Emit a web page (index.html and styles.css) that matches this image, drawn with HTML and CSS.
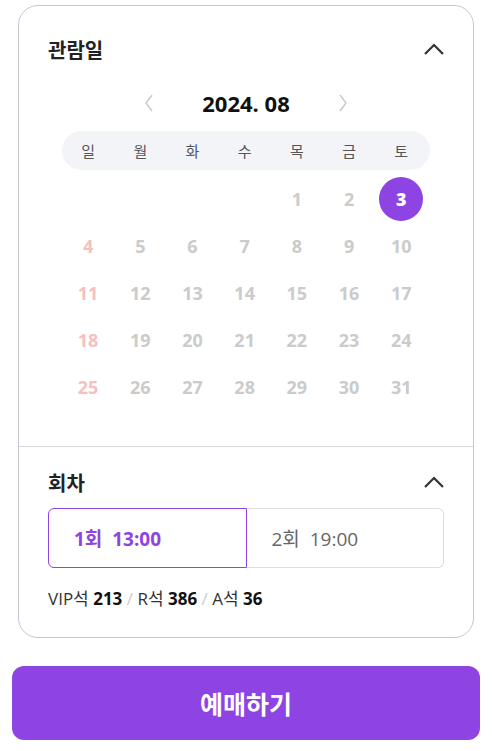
FILE: index.html
```html
<!DOCTYPE html>
<html lang="ko">
  <head>
    <meta charset="UTF-8" />
    <meta name="viewport" content="width=device-width, initial-scale=1.0" />
    <title>예매</title>
    <link rel="stylesheet" href="styles.css" />
  </head>
  <body>
    <div class="page">
      <div class="card">
        <section class="section date-section">
          <div class="section-head">
            <h2>관람일</h2>
            <svg class="toggle" width="22" height="14" viewBox="0 0 22 14">
              <path d="M2 12 L11 3 L20 12" fill="none" stroke="#333" stroke-width="2.2" />
            </svg>
          </div>

          <div class="month-nav">
            <svg class="nav-arrow" width="10" height="18" viewBox="0 0 10 18">
              <path d="M8 1 L2 9 L8 17" fill="none" stroke="#c8c8c8" stroke-width="1.4" />
            </svg>
            <span class="month">2024. 08</span>
            <svg class="nav-arrow" width="10" height="18" viewBox="0 0 10 18">
              <path d="M2 1 L8 9 L2 17" fill="none" stroke="#c8c8c8" stroke-width="1.4" />
            </svg>
          </div>

          <div class="weekdays">
            <span>일</span><span>월</span><span>화</span><span>수</span
            ><span>목</span><span>금</span><span>토</span>
          </div>

          <div class="days">
            <span></span><span></span><span></span><span></span>
            <span>1</span><span>2</span>
            <span class="selected"><b>3</b></span>
            <span class="sun">4</span><span>5</span><span>6</span><span>7</span
            ><span>8</span><span>9</span><span>10</span>
            <span class="sun">11</span><span>12</span><span>13</span><span>14</span
            ><span>15</span><span>16</span><span>17</span>
            <span class="sun">18</span><span>19</span><span>20</span><span>21</span
            ><span>22</span><span>23</span><span>24</span>
            <span class="sun">25</span><span>26</span><span>27</span><span>28</span
            ><span>29</span><span>30</span><span>31</span>
          </div>
        </section>

        <section class="section round-section">
          <div class="section-head">
            <h2>회차</h2>
            <svg class="toggle" width="22" height="14" viewBox="0 0 22 14">
              <path d="M2 12 L11 3 L20 12" fill="none" stroke="#333" stroke-width="2.2" />
            </svg>
          </div>

          <div class="rounds">
            <button class="round active">1회&nbsp; 13:00</button>
            <button class="round">2회&nbsp; 19:00</button>
          </div>

          <p class="seats">
            VIP석 <b>213</b> <i>/</i> R석 <b>386</b> <i>/</i> A석 <b>36</b>
          </p>
        </section>
      </div>

      <button class="book-btn">예매하기</button>
    </div>
  </body>
</html>
```

FILE: styles.css
```css
* {
  margin: 0;
  padding: 0;
  box-sizing: border-box;
  font-family: "Open Sans", "Noto Sans CJK KR", sans-serif;
}

body {
  background-color: #fff;
  color: #222;
}

.page {
  padding: 5px 12px 10px;
  display: flex;
  flex-direction: column;
  gap: 28px;
}

.card {
  margin: 0 6px;
  border: 1px solid #c3c7d1;
  border-radius: 20px;
  background-color: #fff;
}

.section {
  padding: 30px 29px 36px;
}

.section-head {
  display: flex;
  justify-content: space-between;
  align-items: center;
  height: 26px;
}

.section-head h2 {
  font-size: 20px;
  font-weight: 700;
  color: #222;
}

.toggle {
  margin-right: -1px;
}

.month-nav {
  margin-top: 26px;
  height: 30px;
  display: flex;
  justify-content: center;
  align-items: center;
  gap: 40px;
}

.month {
  font-size: 22px;
  font-weight: 700;
  color: #111;
  width: 104px;
  text-align: center;
}

.weekdays {
  margin: 13px 14px 0;
  height: 39px;
  background-color: #f3f4f8;
  border-radius: 20px;
  display: grid;
  grid-template-columns: repeat(7, 52.2px);
  align-items: center;
  text-align: center;
  font-size: 15px;
  color: #555;
}

.days {
  margin: 5px 14px 0;
  display: grid;
  grid-template-columns: repeat(7, 52.2px);
  grid-auto-rows: 47px;
  align-items: center;
  justify-items: center;
  font-size: 18px;
  font-weight: 700;
  color: #cbcbcb;
}

.days .sun {
  color: #f6bfc0;
}

.days .selected b {
  display: flex;
  justify-content: center;
  align-items: center;
  width: 44px;
  height: 44px;
  border-radius: 50%;
  background-color: #8e44e3;
  color: #fff;
}

.round-section {
  border-top: 1px solid #d8dae0;
  padding: 22px 29px 28px;
}

.rounds {
  margin-top: 13px;
  display: flex;
}

.round {
  flex: 1;
  height: 60px;
  padding-left: 25px;
  text-align: left;
  background-color: #fff;
  border: 1px solid #dcdde2;
  font-size: 19px;
  color: #666;
}

.round:first-child {
  border-radius: 6px 0 0 6px;
}

.round:last-child {
  border-left: none;
  border-radius: 0 6px 6px 0;
}

.round.active {
  border-color: #8e44e3;
  color: #8e44e3;
  font-weight: 700;
}

.seats {
  margin-top: 21px;
  line-height: 20px;
  font-size: 17px;
  color: #333;
}

.seats b {
  color: #111;
}

.seats i {
  font-style: normal;
  color: #ccc;
}

.book-btn {
  height: 74px;
  border: none;
  border-radius: 12px;
  background-color: #8e44e3;
  color: #fff;
  font-size: 25px;
  font-weight: 700;
}
```
